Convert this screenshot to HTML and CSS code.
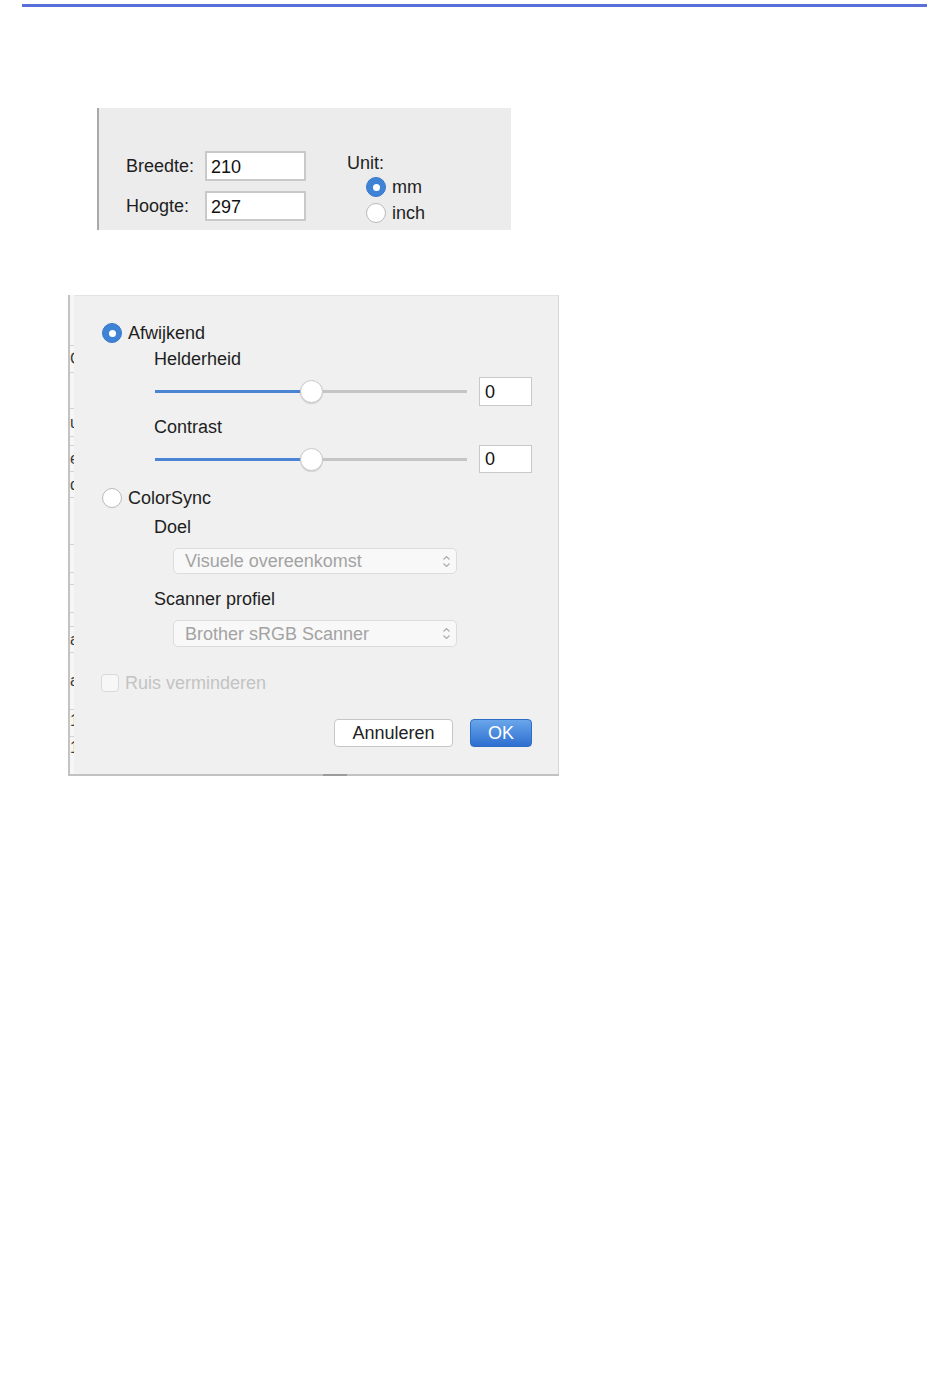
FILE: index.html
```html
<!DOCTYPE html>
<html lang="nl">
<head>
<meta charset="utf-8">
<title>Scaninstellingen</title>
<link rel="stylesheet" href="styles.css">
</head>
<body>
<div class="rule"></div>

<section class="size-panel">
  <div class="dims">
    <span class="dim-label">Breedte:</span><div class="field">210</div>
    <span class="dim-label">Hoogte:</span><div class="field">297</div>
  </div>
  <div class="unit">
    <div class="unit-title">Unit:</div>
    <div class="radio-row first"><span class="radio on"></span><span>mm</span></div>
    <div class="radio-row second"><span class="radio"></span><span>inch</span></div>
  </div>
</section>

<section class="dialog-wrap">
  <div class="dialog-body">
    <div class="behind">
      <div class="bh h51"></div>
      <div class="bh h27">Co</div>
      <div class="bh h36"></div>
      <div class="bh h28">u</div>
      <div class="bh h9"></div>
      <div class="bh h26">e</div>
      <div class="bh h26">d</div>
      <div class="bh h47"></div>
      <div class="bh h28"></div>
      <div class="bh h12"></div>
      <div class="bh h28"></div>
      <div class="bh h14"></div>
      <div class="bh h26">a</div>
      <div class="bh h57">a</div>
      <div class="bh h27 top">1</div>
      <div class="bh h37 top last">1</div>
    </div>
    <div class="dialog">
      <div class="opt-row"><span class="radio on"></span><span>Afwijkend</span></div>
      <div class="sub">
        <div class="sub-label l-helder">Helderheid</div>
        <div class="slider-row">
          <div class="slider">
            <div class="track"><span class="fill"></span><span class="rest"></span></div>
            <span class="thumb"></span>
          </div>
          <div class="num">0</div>
        </div>
        <div class="sub-label l-contrast">Contrast</div>
        <div class="slider-row s2">
          <div class="slider">
            <div class="track"><span class="fill"></span><span class="rest"></span></div>
            <span class="thumb"></span>
          </div>
          <div class="num">0</div>
        </div>
      </div>
      <div class="opt-row colorsync"><span class="radio"></span><span>ColorSync</span></div>
      <div class="sub">
        <div class="sub-label l-doel">Doel</div>
        <div class="select">
          <span>Visuele overeenkomst</span>
          <svg class="chev" width="9" height="15" viewBox="0 0 9 15"><path d="M1.5 5.5 L4.5 2.5 L7.5 5.5 M1.5 9.5 L4.5 12.5 L7.5 9.5" fill="none" stroke="#a9a9a9" stroke-width="1.1"/></svg>
        </div>
        <div class="sub-label l-profiel">Scanner profiel</div>
        <div class="select s2">
          <span>Brother sRGB Scanner</span>
          <svg class="chev" width="9" height="15" viewBox="0 0 9 15"><path d="M1.5 5.5 L4.5 2.5 L7.5 5.5 M1.5 9.5 L4.5 12.5 L7.5 9.5" fill="none" stroke="#a9a9a9" stroke-width="1.1"/></svg>
        </div>
      </div>
      <div class="check-row"><span class="checkbox"></span><span>Ruis verminderen</span></div>
      <div class="buttons">
        <div class="btn btn-cancel">Annuleren</div>
        <div class="btn btn-ok">OK</div>
      </div>
    </div>
  </div>
  <div class="dialog-bottom"><span class="seg-a"></span><span class="seg-b"></span><span class="seg-c"></span></div>
</section>
</body>
</html>
```

FILE: styles.css
```css
* { box-sizing: border-box; }

body {
  margin: 0;
  background: #ffffff;
  font-family: "Liberation Sans", Arial, sans-serif;
  font-size: 18px;
  line-height: 20px;
  color: #1e1e1e;
}

.rule {
  height: 3px;
  margin: 4px 23px 0 22px;
  background: #5a6fd9;
}

/* ---------- size panel ---------- */
.size-panel {
  display: flex;
  align-items: flex-start;
  width: 414px;
  height: 122px;
  margin: 101px 0 0 97px;
  padding: 43px 0 0 27px;
  background: #ececec;
  border-left: 2px solid #a9a9a9;
}

.dims {
  display: grid;
  grid-template-columns: 79px 101px;
  row-gap: 10px;
  align-items: center;
}

.field {
  height: 30px;
  padding: 4px 0 0 4px;
  background: #ffffff;
  border: 2px solid #c9c9c9;
  color: #111;
}

.unit {
  margin: 2px 0 0 41px;
}

.radio-row {
  display: flex;
  align-items: center;
  gap: 6px;
  height: 20px;
  margin-left: 19px;
}
.radio-row.first { margin-top: 4px; }
.radio-row.second { margin-top: 6px; }

.radio {
  flex: none;
  width: 20px;
  height: 20px;
  border-radius: 50%;
  background: #ffffff;
  border: 1px solid #b9b9b9;
  display: flex;
  align-items: center;
  justify-content: center;
}
.radio.on {
  background: #3f83d7;
  border-color: #3777c9;
}
.radio.on::after {
  content: "";
  width: 7px;
  height: 7px;
  border-radius: 50%;
  background: #ffffff;
}

/* ---------- dialog ---------- */
.dialog-wrap {
  width: 491px;
  margin: 65px 0 0 68px;
}

.dialog-body {
  display: flex;
  height: 479px;
}

.behind {
  width: 6px;
  flex: none;
  display: flex;
  flex-direction: column;
  overflow: hidden;
  background: #f6f6f6;
  border-left: 2px solid #c3c3c3;
  font-size: 16px;
  color: #3a3a3a;
}
.bh {
  display: flex;
  align-items: center;
  white-space: nowrap;
  border-bottom: 1px solid #d2d2d2;
}
.bh.top { align-items: flex-start; padding-top: 1px; }
.bh.last { border-bottom: none; }
.h9 { height: 9px; }
.h12 { height: 12px; }
.h14 { height: 14px; }
.h26 { height: 26px; }
.h27 { height: 27px; }
.h28 { height: 28px; }
.h36 { height: 36px; }
.h37 { height: 37px; }
.h47 { height: 47px; }
.h51 { height: 51px; }
.h57 { height: 57px; }

.dialog {
  flex: 1;
  background: #f0f0f0;
  border-top: 1px solid #e3e3e3;
  border-right: 1px solid #d6d6d6;
  padding: 27px 26px 0 28px;
}

.opt-row {
  display: flex;
  align-items: center;
  gap: 6px;
  height: 20px;
}
.opt-row.colorsync { margin-top: 15px; }

.sub { margin-left: 52px; }

.sub-label { height: 20px; }
.l-helder { margin-top: 6px; }
.l-contrast { margin-top: 11px; }
.l-doel { margin-top: 9px; }
.l-profiel { margin-top: 15px; }

.slider-row {
  display: flex;
  align-items: center;
  height: 29px;
  margin: 8px 0 0 1px;
}
.slider-row.s2 { height: 28px; }

.slider {
  position: relative;
  width: 312px;
  height: 23px;
  display: flex;
  align-items: center;
}
.track {
  display: flex;
  width: 100%;
  height: 3px;
}
.fill {
  width: 156px;
  background: #4a84d2;
}
.rest {
  flex: 1;
  background: #c5c5c5;
}
.thumb {
  position: absolute;
  left: 145px;
  top: 0;
  width: 23px;
  height: 23px;
  border-radius: 50%;
  background: #ffffff;
  border: 1px solid #c8c8c8;
  box-shadow: 0 1px 1px rgba(0, 0, 0, 0.12);
}

.num {
  width: 53px;
  height: 100%;
  margin-left: 12px;
  padding-left: 5px;
  display: flex;
  align-items: center;
  background: #ffffff;
  border: 1px solid #c9c9c9;
  color: #111;
}

.select {
  display: flex;
  align-items: center;
  justify-content: space-between;
  width: 284px;
  height: 26px;
  margin: 11px 0 0 19px;
  padding: 0 5px 0 11px;
  background: #f8f8f8;
  border: 1px solid #dcdcdc;
  border-radius: 5px;
  color: #a3a3a3;
}
.select.s2 { height: 27px; }
.chev { flex: none; }

.check-row {
  display: flex;
  align-items: center;
  gap: 6px;
  height: 20px;
  margin: 26px 0 0 -1px;
  color: #c3c3c3;
}
.checkbox {
  width: 18px;
  height: 18px;
  border-radius: 4px;
  background: #f7f7f7;
  border: 1px solid #d9d9d9;
}

.buttons {
  display: flex;
  justify-content: flex-end;
  gap: 17px;
  margin-top: 26px;
}
.btn {
  height: 28px;
  border-radius: 4px;
  display: flex;
  align-items: center;
  justify-content: center;
}
.btn-cancel {
  width: 119px;
  background: #ffffff;
  border: 1px solid #c6c6c6;
  color: #222;
}
.btn-ok {
  width: 62px;
  background: linear-gradient(#69a6eb, #2e6fd0);
  border: 1px solid #2f6cc4;
  color: #ffffff;
}

.dialog-bottom {
  display: flex;
  height: 2px;
}
.seg-a { width: 255px; background: #c2c2c2; }
.seg-b { width: 24px; background: #9c9c9c; }
.seg-c { flex: 1; background: #c2c2c2; }
```
